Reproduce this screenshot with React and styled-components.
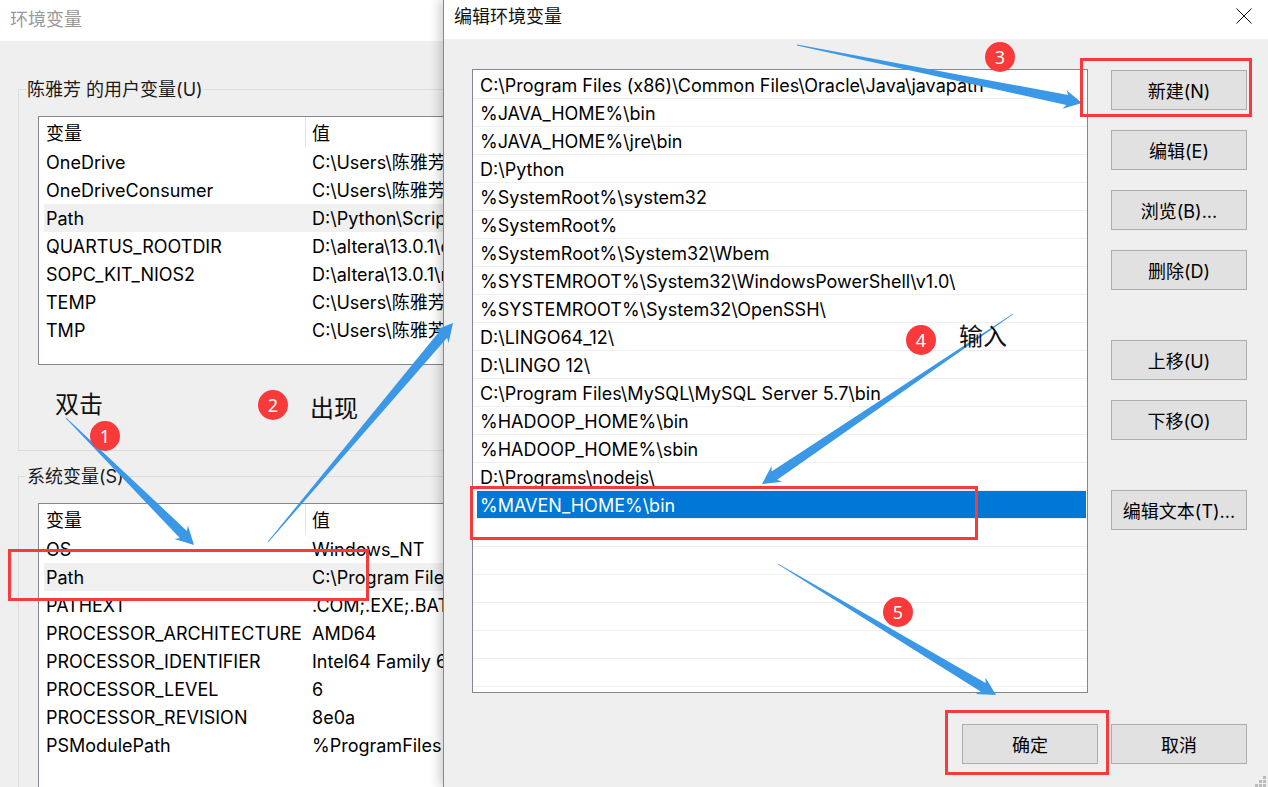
import React from 'react';
import styled, { createGlobalStyle } from 'styled-components';

const GlobalStyle = createGlobalStyle`
  html, body {
    margin: 0;
    padding: 0;
    overflow: hidden;
    background: #efefef;
  }
  * {
    box-sizing: border-box;
  }
`;

const Screen = styled.div`
  position: relative;
  display: flex;
  width: 1268px;
  height: 787px;
  overflow: hidden;
  font-family: "Inter", "Noto Sans CJK SC", sans-serif;
  font-size: 18px;
  color: #000;
`;

const BackWindow = styled.div`
  width: 443px;
  flex-shrink: 0;
  height: 100%;
  overflow: hidden;
  background: #efefef;
`;

const TitleBar = styled.div`
  display: flex;
  align-items: center;
  justify-content: space-between;
  height: ${(p) => p.$height}px;
  padding: 0 16px ${(p) => p.$lift}px ${(p) => p.$left}px;
  background: #fff;
  color: ${(p) => p.$color};
`;

const CloseIcon = styled.svg`
  margin-top: ${(p) => p.$drop}px;
`;

const GroupBox = styled.div`
  width: 600px;
  height: ${(p) => p.$height}px;
  margin: ${(p) => p.$top}px 0 0 18px;
  border: 1px solid #dcdcdc;
`;

const GroupTitle = styled.div`
  width: fit-content;
  height: 26px;
  margin: -13px 0 13px 7px;
  padding: 0 1px;
  line-height: 26px;
  background: #efefef;
  color: #1a1a1a;
`;

const VarList = styled.div`
  width: 560px;
  height: ${(p) => p.$height}px;
  margin-left: 19px;
  padding-left: 5px;
  overflow: hidden;
  background: #fff;
  border: 1px solid #828790;
`;

const HeaderRow = styled.div`
  display: grid;
  grid-template-columns: 259px 1fr;
  height: 31px;
  padding-left: 2px;
  line-height: 33px;
`;

const HeaderCell = styled.div`
  height: 30px;
  padding-left: ${(p) => (p.$value ? 6 : 0)}px;
  border-left: ${(p) => (p.$value ? '1px solid #e5e5e5' : 'none')};
`;

const VarRow = styled.div`
  display: grid;
  grid-template-columns: 266px 1fr;
  height: 28px;
  padding-left: 2px;
  line-height: 30px;
  white-space: nowrap;
  background: ${(p) => (p.$active ? '#f0f0f0' : 'transparent')};
`;

const Dialog = styled.div`
  position: relative;
  flex: 1;
  height: 100%;
  background: #efefef;
  border-left: 1px solid #85888c;
  box-shadow: -4px 0 10px rgba(0, 0, 0, 0.18);
`;

const DialogBody = styled.div`
  display: grid;
  grid-template-columns: 616px 136px;
  column-gap: 23px;
  padding: 30px 0 0 28px;
`;

const PathList = styled.div`
  height: 624px;
  padding-top: 1px;
  overflow: hidden;
  background: #fff;
  border: 1px solid #828790;
`;

const PathRow = styled.div`
  height: 28px;
  padding-left: ${(p) => (p.$selected ? 4 : 7)}px;
  border-bottom: 1px solid #efefef;
  line-height: 29px;
  white-space: nowrap;
`;

const SelectedText = styled.div`
  height: 27px;
  padding-left: 3px;
  margin-right: 1px;
  background: #0078d7;
  color: #fff;
`;

const ButtonColumn = styled.div`
  display: flex;
  flex-direction: column;
  gap: 20px;
  padding-top: 1px;
`;

const WinButton = styled.div`
  display: flex;
  align-items: center;
  justify-content: center;
  width: 136px;
  height: 40px;
  flex-shrink: 0;
  margin-top: ${(p) => p.$push || 0}px;
  background: #e1e1e1;
  border: 1px solid #adadad;
`;

const Footer = styled.div`
  display: flex;
  justify-content: flex-end;
  gap: 13px;
  margin-top: 31px;
  padding-right: 21px;
`;

const Grip = styled.svg`
  position: absolute;
  right: 2px;
  bottom: 0;
`;

const AnnotationLayer = styled.div`
  position: absolute;
  inset: 0;
  pointer-events: none;
`;

const ArrowCanvas = styled.svg`
  position: absolute;
  inset: 0;
`;

const Badge = styled.div`
  position: absolute;
  left: ${(p) => p.$x - 15}px;
  top: ${(p) => p.$y - 15}px;
  display: flex;
  align-items: center;
  justify-content: center;
  width: 30px;
  height: 30px;
  border-radius: 50%;
  background: #f83a3a;
  color: #fff;
  font-family: "Noto Sans", sans-serif;
  font-size: 18px;
`;

const Note = styled.div`
  position: absolute;
  left: ${(p) => p.$x}px;
  top: ${(p) => p.$y}px;
  font-size: 24px;
  line-height: 32px;
  color: #111;
`;

const RedBox = styled.div`
  position: absolute;
  left: ${(p) => p.$x}px;
  top: ${(p) => p.$y}px;
  width: ${(p) => p.$w}px;
  height: ${(p) => p.$h}px;
  border: 3px solid #f83a3a;
`;

const userVars = [
  ['OneDrive', 'C:\\Users\\陈雅芳\\OneDrive'],
  ['OneDriveConsumer', 'C:\\Users\\陈雅芳\\OneDrive'],
  ['Path', 'D:\\Python\\Scripts\\'],
  ['QUARTUS_ROOTDIR', 'D:\\altera\\13.0.1\\quartus'],
  ['SOPC_KIT_NIOS2', 'D:\\altera\\13.0.1\\nios2eds'],
  ['TEMP', 'C:\\Users\\陈雅芳\\AppData'],
  ['TMP', 'C:\\Users\\陈雅芳\\AppData'],
];

const systemVars = [
  ['OS', 'Windows_NT'],
  ['Path', 'C:\\Program Files (x86)'],
  ['PATHEXT', '.COM;.EXE;.BAT;.CMD'],
  ['PROCESSOR_ARCHITECTURE', 'AMD64'],
  ['PROCESSOR_IDENTIFIER', 'Intel64 Family 6 Model'],
  ['PROCESSOR_LEVEL', '6'],
  ['PROCESSOR_REVISION', '8e0a'],
  ['PSModulePath', '%ProgramFiles%\\WindowsPowerShell'],
];

const paths = [
  'C:\\Program Files (x86)\\Common Files\\Oracle\\Java\\javapath',
  '%JAVA_HOME%\\bin',
  '%JAVA_HOME%\\jre\\bin',
  'D:\\Python',
  '%SystemRoot%\\system32',
  '%SystemRoot%',
  '%SystemRoot%\\System32\\Wbem',
  '%SYSTEMROOT%\\System32\\WindowsPowerShell\\v1.0\\',
  '%SYSTEMROOT%\\System32\\OpenSSH\\',
  'D:\\LINGO64_12\\',
  'D:\\LINGO 12\\',
  'C:\\Program Files\\MySQL\\MySQL Server 5.7\\bin',
  '%HADOOP_HOME%\\bin',
  '%HADOOP_HOME%\\sbin',
  'D:\\Programs\\nodejs\\',
  '%MAVEN_HOME%\\bin',
  '', '', '', '', '', '', '',
];

const sideButtons = [
  { label: '新建(N)' },
  { label: '编辑(E)' },
  { label: '浏览(B)...' },
  { label: '删除(D)' },
  { label: '上移(U)', push: 30 },
  { label: '下移(O)' },
  { label: '编辑文本(T)...', push: 30 },
];

const arrows = [
  { from: [66, 418], to: [194, 545] },
  { from: [268, 542], to: [453, 323] },
  { from: [797, 45], to: [1082, 103] },
  { from: [1013, 314], to: [762, 484] },
  { from: [778, 564], to: [996, 695] },
];

// tapered arrow: hairline at the tail, widening up to the head
function arrowPoints({ from, to }, neck = 10, head = 19, len = 15) {
  const dx = to[0] - from[0];
  const dy = to[1] - from[1];
  const d = Math.hypot(dx, dy);
  const ux = dx / d;
  const uy = dy / d;
  const nx = -uy;
  const ny = ux;
  const bx = to[0] - ux * len;
  const by = to[1] - uy * len;
  const at = (x, y, w) => `${(x + nx * w).toFixed(1)},${(y + ny * w).toFixed(1)}`;
  return [
    at(from[0], from[1], 0.4),
    at(bx, by, neck / 2),
    at(bx - ux * 3, by - uy * 3, head / 2),
    `${to[0]},${to[1]}`,
    at(bx - ux * 3, by - uy * 3, -head / 2),
    at(bx, by, -neck / 2),
    at(from[0], from[1], -0.4),
  ].join(' ');
}

function VarTable({ rows, height }) {
  return (
    <VarList $height={height}>
      <HeaderRow>
        <HeaderCell>变量</HeaderCell>
        <HeaderCell $value>值</HeaderCell>
      </HeaderRow>
      {rows.map(([name, value]) => (
        <VarRow key={name} $active={name === 'Path'}>
          <div>{name}</div>
          <div>{value}</div>
        </VarRow>
      ))}
    </VarList>
  );
}

export default function App() {
  return (
    <Screen>
      <GlobalStyle />
      <BackWindow>
        <TitleBar $height={41} $left={10} $lift={6} $color="#999">环境变量</TitleBar>
        <GroupBox $top={48} $height={362}>
          <GroupTitle>陈雅芳 的用户变量(U)</GroupTitle>
          <VarTable rows={userVars} height={249} />
        </GroupBox>
        <GroupBox $top={25} $height={400}>
          <GroupTitle>系统变量(S)</GroupTitle>
          <VarTable rows={systemVars} height={320} />
        </GroupBox>
      </BackWindow>

      <Dialog>
        <TitleBar $height={39} $left={10} $lift={10} $color="#111">
          编辑环境变量
          <CloseIcon $drop={2} width="16" height="16" viewBox="0 0 16 16">
            <path d="M0.5 0.5L15.5 15.5M15.5 0.5L0.5 15.5" stroke="#111" strokeWidth="1" fill="none" />
          </CloseIcon>
        </TitleBar>
        <DialogBody>
          <PathList>
            {paths.map((path, i) => (
              <PathRow key={i} $selected={path.startsWith('%MAVEN')}>
                {path.startsWith('%MAVEN') ? <SelectedText>{path}</SelectedText> : path}
              </PathRow>
            ))}
          </PathList>
          <ButtonColumn>
            {sideButtons.map((b) => (
              <WinButton key={b.label} $push={b.push}>{b.label}</WinButton>
            ))}
          </ButtonColumn>
        </DialogBody>
        <Footer>
          <WinButton>确定</WinButton>
          <WinButton>取消</WinButton>
        </Footer>
        <Grip width="11" height="11" viewBox="0 0 11 11" fill="#bcbcbc">
          <rect x="8" y="0" width="3" height="3" />
          <rect x="4" y="4" width="3" height="3" />
          <rect x="8" y="4" width="3" height="3" />
          <rect x="0" y="8" width="3" height="3" />
          <rect x="4" y="8" width="3" height="3" />
          <rect x="8" y="8" width="3" height="3" />
        </Grip>
      </Dialog>

      <AnnotationLayer>
        <ArrowCanvas width="1268" height="787" viewBox="0 0 1268 787">
          {arrows.map((a) => (
            <polygon key={a.from.join()} points={arrowPoints(a)} fill="#3b98e6" />
          ))}
        </ArrowCanvas>
        <RedBox $x={8} $y={549} $w={361} $h={52} />
        <RedBox $x={470} $y={486} $w={508} $h={54} />
        <RedBox $x={1080} $y={58} $w={172} $h={59} />
        <RedBox $x={945} $y={710} $w={164} $h={65} />
        <Badge $x={105} $y={436}>1</Badge>
        <Badge $x={273} $y={405}>2</Badge>
        <Badge $x={1000} $y={57}>3</Badge>
        <Badge $x={921} $y={340}>4</Badge>
        <Badge $x={898} $y={612}>5</Badge>
        <Note $x={55} $y={389}>双击</Note>
        <Note $x={310} $y={393}>出现</Note>
        <Note $x={959} $y={321}>输入</Note>
      </AnnotationLayer>
    </Screen>
  );
}
